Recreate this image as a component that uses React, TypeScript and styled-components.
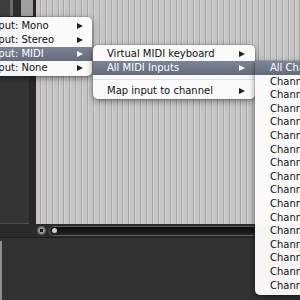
import styled, { createGlobalStyle } from 'styled-components';

const Global = createGlobalStyle`
  html, body {
    margin: 0;
    padding: 0;
    background: #333;
  }
  * { box-sizing: border-box; }
`;

const Screen = styled.div`
  position: relative;
  width: 300px;
  height: 300px;
  overflow: hidden;
  display: flex;
  flex-direction: column;
  background: #323232;
  font-family: "DejaVu Sans", Verdana, sans-serif;
  font-size: 10px;
`;

const MainRow = styled.div`
  display: flex;
  height: 224px;
`;

const TrackPanel = styled.div`
  width: 35px;
  display: flex;
  flex-direction: column;
  background: #282828;
`;

const TopStrip = styled.div`
  display: flex;
  height: 16px;
`;

const Seg = styled.div<{ $w: number; $c: string }>`
  width: ${(p) => p.$w}px;
  background: ${(p) => p.$c};
`;

const TrackBody = styled.div`
  flex: 1;
  display: flex;
`;

const TrackList = styled.div`
  width: 29px;
  background: #343434;
  border-bottom: 1px solid #505050;
`;

const Arrange = styled.div`
  flex: 1;
  border-left: 1px solid #4a1a1a;
  background: repeating-linear-gradient(
    90deg,
    #c5c5c5 0px,
    #c5c5c5 3.9px,
    #a7a7a7 3.9px,
    #a7a7a7 4.9px,
    #d2d2d2 4.9px,
    #d2d2d2 5.9px
  );
`;

const ScrollRow = styled.div`
  display: flex;
  align-items: center;
  height: 14px;
  background: #2b2b2b;
  border-bottom: 1px solid #1f1f1f;
  padding-left: 37px;
  gap: 3px;
`;

const RoundButton = styled.div`
  width: 9px;
  height: 9px;
  border-radius: 50%;
  background: radial-gradient(circle, #1a1a1a 0 1.5px, #a0a0a0 2px, #5a5a5a 4.5px);
`;

const Track = styled.div`
  flex: 1;
  height: 10px;
  border-radius: 5px 0 0 5px;
  border: 1px solid #5c5c5c;
  border-right: none;
  background: linear-gradient(#0c0c0c, #262626);
  display: flex;
  align-items: center;
  padding-left: 2px;
`;

const Knob = styled.div`
  width: 5px;
  height: 5px;
  border-radius: 50%;
  background: #d0d0d0;
`;

const Bottom = styled.div`
  flex: 1;
  display: flex;
  padding-top: 3px;
  background: #323232;
`;

const BottomEdge = styled.div`
  width: 2px;
  background: #8e8e8e;
`;

const Menu = styled.div<{ $left: number; $top: number; $width: number; $flatTop?: boolean }>`
  position: absolute;
  left: ${(p) => p.$left}px;
  top: ${(p) => p.$top}px;
  width: ${(p) => p.$width}px;
  padding: ${(p) => (p.$flatTop ? '0 0 3px' : '2px 0 1px')};
  background: rgba(252, 252, 252, 0.97);
  border-radius: ${(p) => (p.$flatTop ? '0 0 5px 5px' : '5px')};
  box-shadow: 0 2px 6px rgba(0, 0, 0, 0.45), 0 0 0 0.5px rgba(0, 0, 0, 0.2);
`;

const Item = styled.div<{ $active?: boolean; $h?: number; $indent?: number }>`
  position: relative;
  height: ${(p) => p.$h ?? 14}px;
  line-height: ${(p) => p.$h ?? 14}px;
  padding-left: ${(p) => p.$indent ?? 14}px;
  white-space: nowrap;
  color: ${(p) => (p.$active ? '#fff' : '#111')};
  background: ${(p) => (p.$active ? 'linear-gradient(#7c8495, #636b7d)' : 'transparent')};
`;

const Arrow = styled.span<{ $active?: boolean; $right: number }>`
  position: absolute;
  right: ${(p) => p.$right}px;
  top: 50%;
  margin-top: -3.5px;
  width: 0;
  height: 0;
  border-top: 3.5px solid transparent;
  border-bottom: 3.5px solid transparent;
  border-left: 6px solid ${(p) => (p.$active ? '#fff' : '#222')};
`;

const Separator = styled.div`
  height: 9px;
  display: flex;
  align-items: center;
  &::after {
    content: '';
    flex: 1;
    height: 1px;
    background: #e0e0e0;
  }
`;

const inputs = ['Input: Mono', 'Input: Stereo', 'Input: MIDI', 'Input: None'];
const channels = Array.from({ length: 16 }, (_, i) => `Channel ${i + 1}`);

export default function App() {
  return (
    <Screen>
      <Global />
      <MainRow>
        <TrackPanel>
          <TopStrip>
            <Seg $w={10} $c="#3e3e3e" />
            <Seg $w={3} $c="#6c6c6c" />
            <Seg $w={8} $c="#2e2e2e" />
            <Seg $w={12} $c="#a0a0a0" />
            <Seg $w={2} $c="#222" />
          </TopStrip>
          <TrackBody>
            <TrackList />
          </TrackBody>
        </TrackPanel>
        <Arrange />
      </MainRow>
      <ScrollRow>
        <RoundButton />
        <Track>
          <Knob />
        </Track>
      </ScrollRow>
      <Bottom>
        <BottomEdge />
      </Bottom>

      <Menu $left={-25} $top={17} $width={117}>
        {inputs.map((t, i) => (
          <Item key={t} $active={i === 2}>
            {t}
            <Arrow $right={9} $active={i === 2} />
          </Item>
        ))}
      </Menu>

      <Menu $left={93} $top={45} $width={162}>
        <Item>
          Virtual MIDI keyboard
          <Arrow $right={10} />
        </Item>
        <Item $active>
          All MIDI Inputs
          <Arrow $right={10} $active />
        </Item>
        <Separator />
        <Item>
          Map input to channel
          <Arrow $right={10} />
        </Item>
      </Menu>

      <Menu $left={255} $top={61} $width={80} $flatTop>
        <Item $active $h={13.6} $indent={15}>
          All Channels
        </Item>
        {channels.map((c) => (
          <Item key={c} $h={13.6} $indent={15}>
            {c}
          </Item>
        ))}
      </Menu>
    </Screen>
  );
}
